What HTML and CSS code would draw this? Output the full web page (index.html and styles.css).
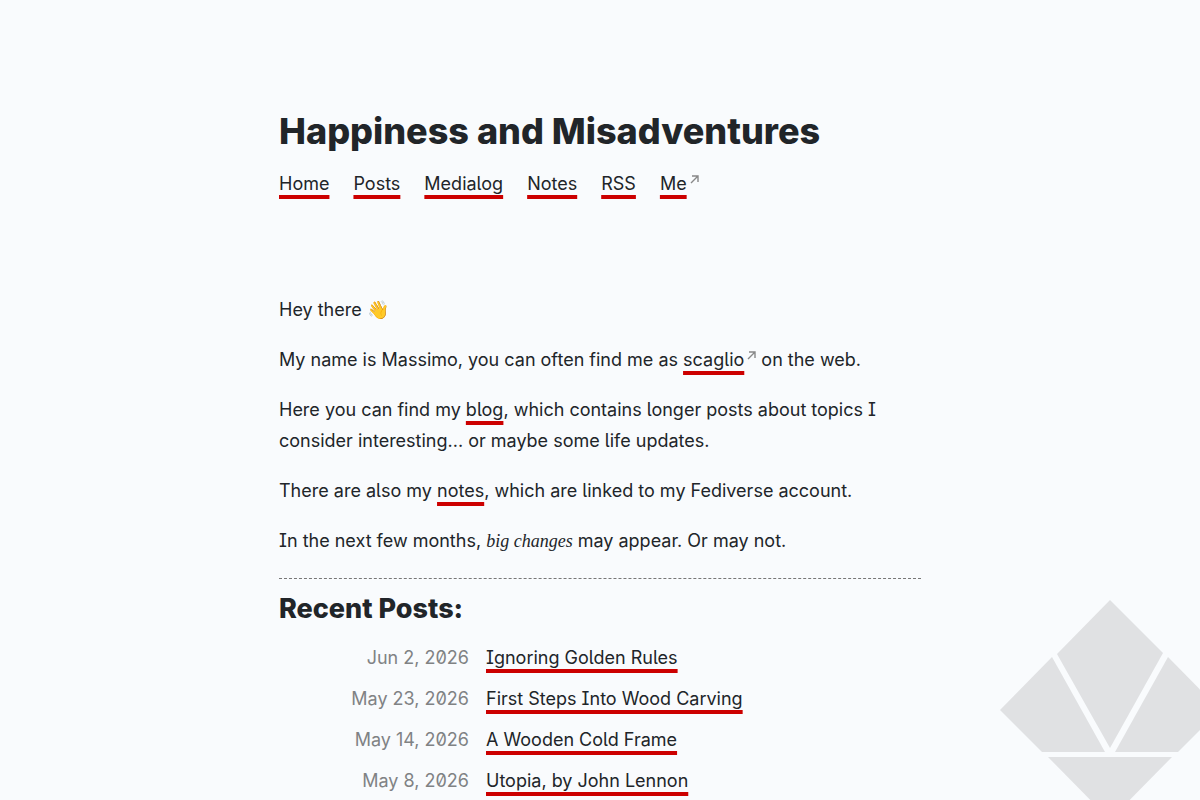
FILE: index.html
```html
<!DOCTYPE html>
<html lang="en">
<head>
  <meta charset="UTF-8">
  <meta name="viewport" content="width=device-width, initial-scale=1">
  <title>Happiness and Misadventures</title>
  <link rel="stylesheet" href="styles.css">
</head>
<body>
  <div class="page">
    <header>
      <h1>Happiness and Misadventures</h1>
      <nav>
        <a href="/">Home</a>
        <a href="/posts">Posts</a>
        <a href="/medialog">Medialog</a>
        <a href="/notes">Notes</a>
        <a href="/rss.xml">RSS</a>
        <a href="/me" rel="me">Me<svg class="arrow" viewBox="0 0 9 9" aria-hidden="true"><path d="M1 8 8 1M2 1h6v6"/></svg></a>
      </nav>
    </header>

    <main>
      <p>Hey there 👋</p>
      <p>My name is Massimo, you can often find me as <a href="/me" rel="me">scaglio<svg class="arrow" viewBox="0 0 9 9" aria-hidden="true"><path d="M1 8 8 1M2 1h6v6"/></svg></a> on the web.</p>
      <p>Here you can find my <a href="/posts">blog</a>, which contains longer posts about topics I consider interesting... or maybe some life updates.</p>
      <p>There are also my <a href="/notes">notes</a>, which are linked to my Fediverse account.</p>
      <p>In the next few months, <em>big changes</em> may appear. Or may not.</p>
      <hr>
      <h2>Recent Posts:</h2>
      <ul class="posts">
        <li><time datetime="2026-06-02">Jun 2, 2026</time><span><a href="/posts/ignoring-golden-rules">Ignoring Golden Rules</a></span></li>
        <li><time datetime="2026-05-23">May 23, 2026</time><span><a href="/posts/wood-carving">First Steps Into Wood Carving</a></span></li>
        <li><time datetime="2026-05-14">May 14, 2026</time><span><a href="/posts/cold-frame">A Wooden Cold Frame</a></span></li>
        <li><time datetime="2026-05-08">May 8, 2026</time><span><a href="/posts/utopia">Utopia, by John Lennon</a></span></li>
      </ul>
    </main>
  </div>

  <svg class="logo" viewBox="0 0 200 200" aria-hidden="true">
    <path d="M110 0 163 53 110 148 57 54Z"/>
    <path d="M52 57 0 110 42 152H105Z"/>
    <path d="M168 57 220 110 178 152H115Z"/>
    <path d="M48 157H172L110 220Z"/>
  </svg>
</body>
</html>
```

FILE: styles.css
```css
* { box-sizing: border-box; }
html { scrollbar-width: none; }
body {
  margin: 0;
  background: #f9fbfd;
  color: #212529;
  font-family: Inter, sans-serif;
  font-size: 18px;
  font-feature-settings: "cv05", "cv08", "zero";
  line-height: 31px;
}
.page {
  max-width: 682px;
  margin: 0 auto;
  padding: 107px 20px 0;
}
h1, h2 { margin: 0; font-weight: 800; }
h1 {
  font-size: 36px;
  line-height: 48px;
}
h2 {
  font-size: 27px;
  line-height: 40px;
}
a {
  color: inherit;
  text-decoration: underline #cc0000 4px;
  text-underline-offset: 5px;
  text-decoration-skip-ink: none;
}
nav {
  display: flex;
  flex-wrap: wrap;
  gap: 24px;
  margin-top: 13px;
}
main { margin-top: 95px; }
p { margin: 0 0 19px; }
em {
  font-family: "Liberation Serif", serif;
  font-size: 18px;
}
hr {
  margin: 21px 0 10px;
  border: 0;
  border-top: 1px dashed #777;
}
.arrow {
  width: 9px;
  height: 9px;
  margin-left: 3px;
  vertical-align: 6px;
  fill: none;
  stroke: #888;
  stroke-width: 1.4;
}
.posts {
  list-style: none;
  margin: 13px 0 0;
  padding: 0;
}
.posts li {
  display: grid;
  grid-template-columns: 190px 1fr;
  gap: 17px;
  margin-bottom: 10px;
}
.posts time {
  color: #808284;
  text-align: right;
}
.logo {
  position: fixed;
  right: 0;
  bottom: 0;
  width: 200px;
  height: 200px;
  fill: #e0e1e3;
}
```
